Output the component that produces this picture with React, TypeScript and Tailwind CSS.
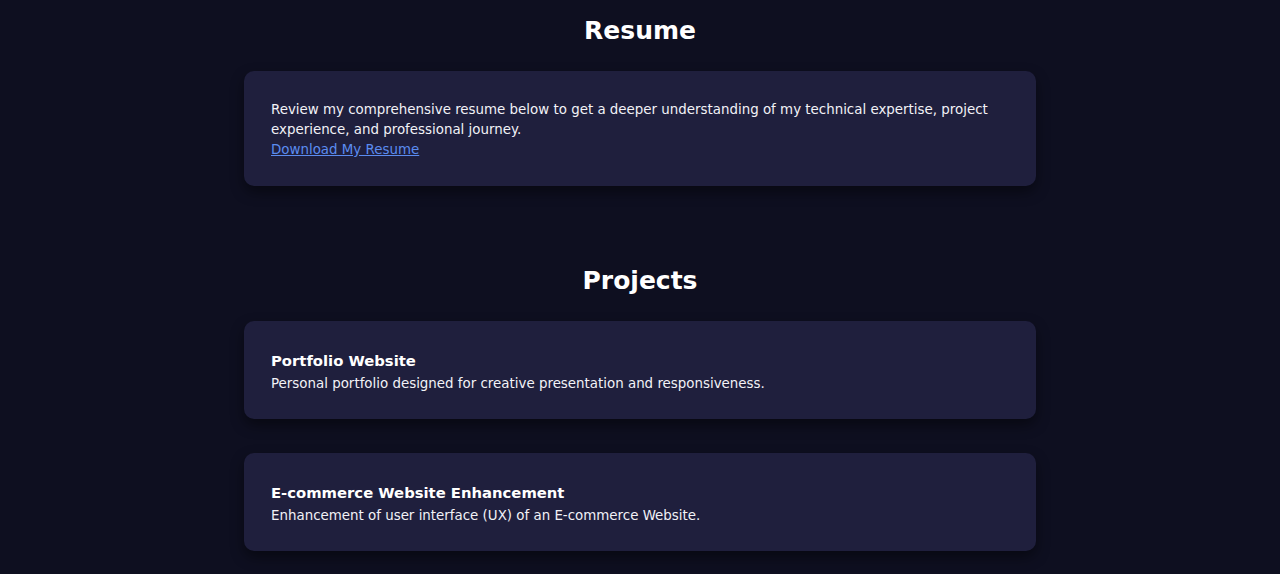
import React from "react";

const projects = [
  {
    title: "Portfolio Website",
    desc: "Personal portfolio designed for creative presentation and responsiveness.",
  },
  {
    title: "E-commerce Website Enhancement",
    desc: "Enhancement of user interface (UX) of an E-commerce Website.",
  },
];

const Card = (props: { children: React.ReactNode; className?: string }) => (
  <div
    className={`rounded-[10px] bg-[#1f1f3d] px-[27px] shadow-[0_6px_14px_rgba(0,0,0,0.45)] ${props.className ?? ""}`}
  >
    {props.children}
  </div>
);

export default function App() {
  return (
    <main
      className="min-h-[574px] w-full bg-[#0e0f20] text-[#f2f2f7]"
      style={{ fontFamily: '"DejaVu Sans", "Open Sans", sans-serif' }}
    >
      <div className="mx-auto flex w-[792px] flex-col pt-[13px]">
        {/* Resume */}
        <section className="flex flex-col gap-[22px]">
          <h2 className="text-center text-[25px] font-bold leading-[36px] text-white">
            Resume
          </h2>
          <Card className="pt-[29px] pb-[26px]">
            <p className="text-[13.4px] leading-[20px]">
              Review my comprehensive resume below to get a deeper understanding
              of my technical expertise, project experience, and professional
              journey.
            </p>
            <a
              href="#"
              className="block w-fit text-[13.4px] leading-[20px] text-[#5b8cf0] underline"
            >
              Download My Resume
            </a>
          </Card>
        </section>

        {/* Projects */}
        <section className="mt-[77px] flex flex-col gap-[22px]">
          <h2 className="text-center text-[25px] font-bold leading-[36px] text-white">
            Projects
          </h2>
          <div className="flex flex-col gap-[34px]">
            {projects.map((p) => (
              <Card key={p.title} className="pt-[29px] pb-[24px]">
                <h3 className="text-[14.8px] font-bold leading-[22px] text-white">
                  {p.title}
                </h3>
                <p className="text-[13.4px] leading-[23px]">{p.desc}</p>
              </Card>
            ))}
          </div>
        </section>
      </div>
    </main>
  );
}
